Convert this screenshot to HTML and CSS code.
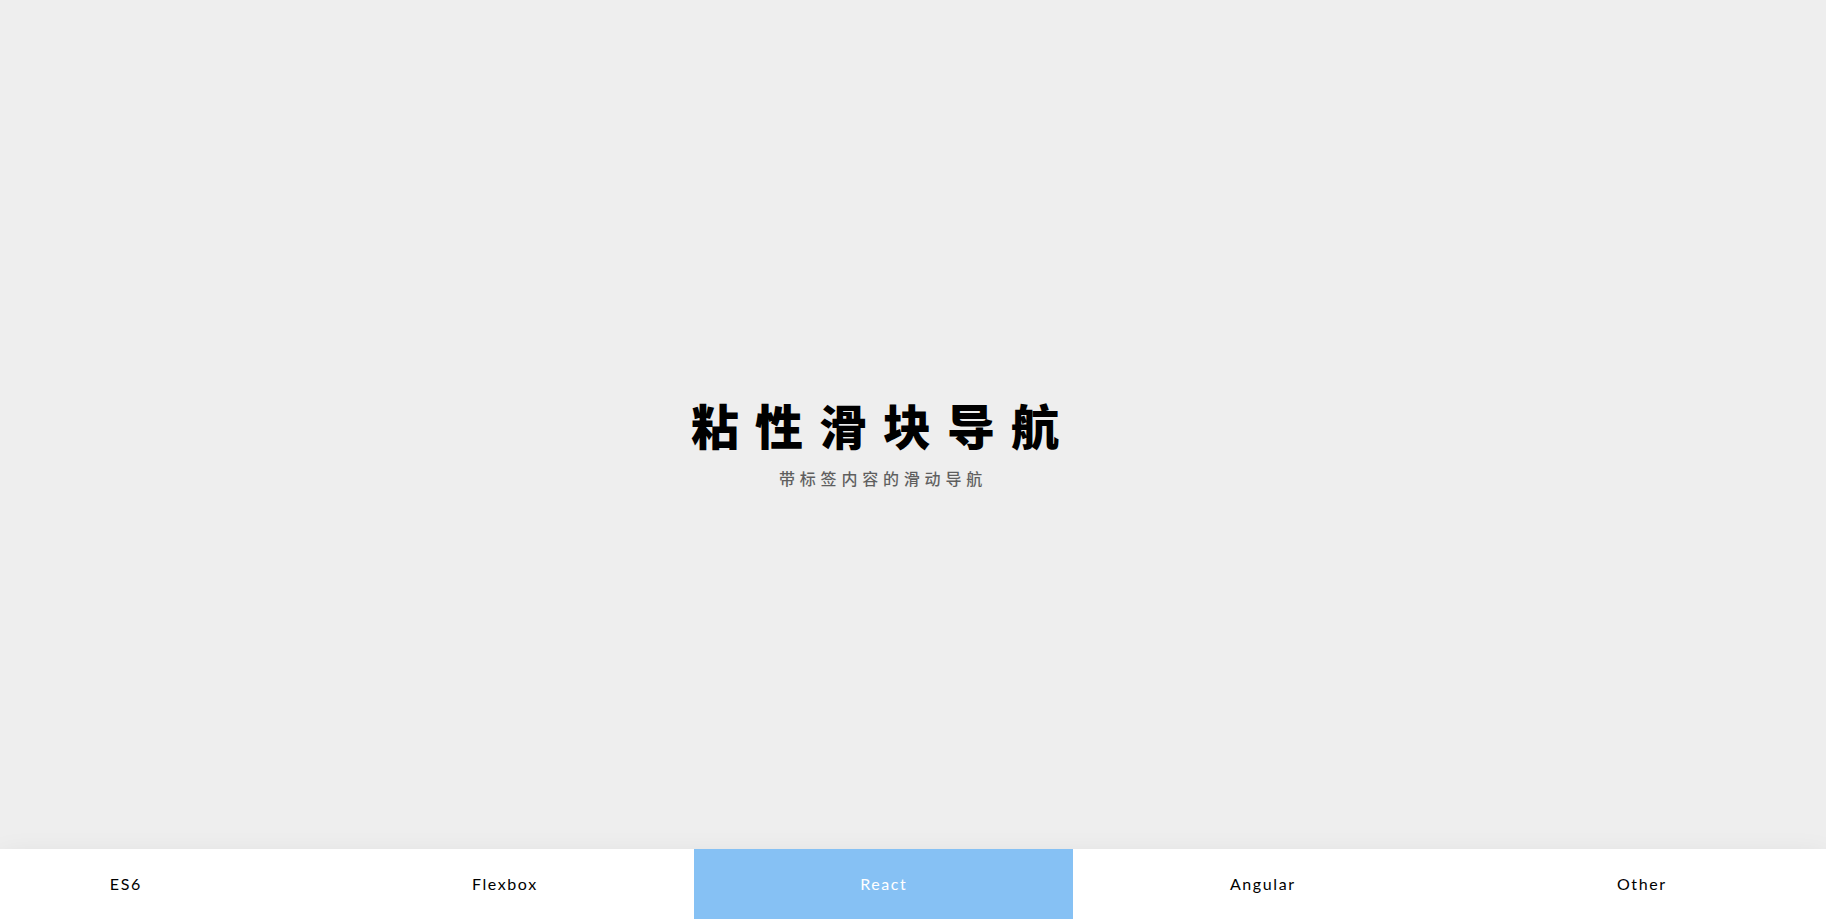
FILE: index.html
```html
<!DOCTYPE html>
<html lang="zh-CN">
<head>
<meta charset="utf-8">
<title>粘性滑块导航</title>
<link rel="stylesheet" href="styles.css">
</head>
<body>
<section class="hero">
  <h1 class="hero-title">粘性滑块导航</h1>
  <h3 class="hero-subtitle">带标签内容的滑动导航</h3>
</section>
<nav class="tabs">
  <div class="tabs-row">
    <a class="tab" href="#es6">ES6</a>
    <a class="tab" href="#flexbox">Flexbox</a>
    <a class="tab tab-active" href="#react">React</a>
    <a class="tab" href="#angular">Angular</a>
    <a class="tab" href="#other">Other</a>
  </div>
</nav>
</body>
</html>
```

FILE: styles.css
```css
* {
  box-sizing: border-box;
}

html, body {
  margin: 0;
  padding: 0;
  overflow: hidden;
}

body {
  font-family: "Lato", "Noto Sans CJK SC", sans-serif;
  background: #eeeeee;
  color: #000;
}

.hero {
  height: 849px;
  background: #eeeeee;
  display: flex;
  flex-direction: column;
  justify-content: center;
  align-items: center;
  padding: 35px 60px 0 0;
  text-align: center;
}

.hero-title {
  margin: 0;
  font-family: "Noto Sans CJK SC", sans-serif;
  font-size: 48px;
  font-weight: 900;
  line-height: 58px;
  letter-spacing: 16px;
  color: #000;
}

.hero-subtitle {
  margin: 13px 0 0 0;
  font-family: "Noto Sans CJK SC", sans-serif;
  font-size: 16px;
  font-weight: 500;
  line-height: 24px;
  letter-spacing: 4.8px;
  color: #000;
  opacity: 0.6;
}

.tabs {
  height: 70px;
  background: #ffffff;
  box-shadow: 0 10px 30px rgba(0, 0, 0, 0.1);
  padding-right: 60px;
  overflow: hidden;
}

.tabs-row {
  display: flex;
  justify-content: center;
  height: 100%;
}

.tab {
  flex: 0 0 379px;
  display: flex;
  align-items: center;
  justify-content: center;
  color: #000;
  text-decoration: none;
  font-family: "Lato", sans-serif;
  font-size: 16px;
  letter-spacing: 1.6px;
  padding-left: 1.6px;
  padding-bottom: 1px;
}

.tab-active {
  background: #86c1f4;
  color: #ffffff;
}
```
